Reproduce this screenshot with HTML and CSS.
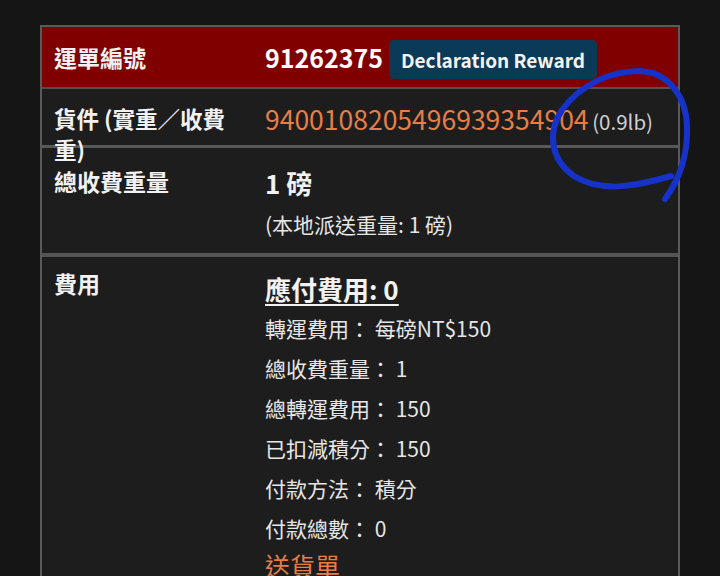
FILE: index.html
```html
<!DOCTYPE html>
<html lang="zh-Hant">
<head>
<meta charset="utf-8">
<link rel="stylesheet" href="styles.css">
</head>
<body>
<div class="page">
  <div class="table">
    <div class="row row-head">
      <div class="label">運單編號</div>
      <div class="value head-value">
        <span class="order-no">91262375</span>
        <span class="badge">Declaration Reward</span>
      </div>
    </div>
    <div class="row row-parcel">
      <div class="label label-wrap">貨件 (實重／收費重)</div>
      <div class="value">
        <span class="tracking">9400108205496939354904</span>
        <span class="weight">(0.9lb)</span>
      </div>
    </div>
    <div class="row row-weight">
      <div class="label">總收費重量</div>
      <div class="value stack">
        <div class="big">1 磅</div>
        <div class="line">(本地派送重量: 1 磅)</div>
      </div>
    </div>
    <div class="row row-fee">
      <div class="label">費用</div>
      <div class="value stack">
        <div class="big due">應付費用: 0</div>
        <div class="line">轉運費用：&nbsp;每磅NT$150</div>
        <div class="line">總收費重量：&nbsp;1</div>
        <div class="line">總轉運費用：&nbsp;150</div>
        <div class="line">已扣減積分：&nbsp;150</div>
        <div class="line">付款方法：&nbsp;積分</div>
        <div class="line">付款總數：&nbsp;0</div>
        <div class="link">送貨單</div>
      </div>
    </div>
  </div>
  <svg class="scribble" width="720" height="576" viewBox="0 0 720 576">
    <path d="M 671 176 C 640 185 602 194 574 176 C 552 161 546 134 562 110 C 580 85 610 71 640 71 C 668 72 686 96 687 126 C 688 156 679 180 665 199" fill="none" stroke="#1632c8" stroke-width="6" stroke-linecap="round" stroke-linejoin="round"/>
  </svg>
</div>
</body>
</html>
```

FILE: styles.css
```css
html, body {
  margin: 0;
  padding: 0;
  background: #151515;
}
body {
  font-family: "Noto Sans CJK TC", "Noto Sans", sans-serif;
  color: #e6e6e6;
  overflow: hidden;
}
.page {
  position: relative;
  width: 720px;
  height: 576px;
  padding: 25px 0 0 40px;
  box-sizing: border-box;
}
.table {
  width: 640px;
  border: 2px solid #5a5a5a;
  border-bottom: none;
  background: #1d1d1d;
  box-sizing: border-box;
}
.row {
  display: flex;
  border-bottom: 3px solid #555;
}
.label {
  width: 223px;
  flex: none;
  padding-left: 12px;
  box-sizing: border-box;
  font-size: 23px;
  font-weight: 700;
  color: #f2f2f2;
  line-height: 31px;
}
.value {
  flex: 1;
  min-width: 0;
}
.row-head {
  background: #800000;
  height: 60px;
  align-items: center;
  border-bottom: 2px solid #505050;
}
.head-value {
  display: flex;
  align-items: center;
  gap: 6px;
}
.order-no {
  font-size: 25px;
  font-weight: 700;
  color: #fff;
}
.badge {
  background: #0b3a56;
  color: #f4f4f4;
  font-size: 19px;
  font-weight: 700;
  padding: 6px 12px 5px;
  margin-top: 4px;
  border-radius: 5px;
  line-height: 28px;
}
.row-parcel {
  height: 59px;
  align-items: flex-start;
  padding-top: 14px;
  box-sizing: border-box;
  border-bottom-color: #585858;
}
.row-parcel .label {
  width: 200px;
  margin-right: 23px;
  font-size: 22.5px;
}
.tracking {
  font-size: 26.5px;
  color: #e67e47;
  line-height: 31px;
}
.weight {
  font-size: 20.5px;
  color: #d0d0d0;
}
.row-weight {
  padding: 18px 0 9px;
  border-bottom-width: 4px;
}
.stack {
  display: flex;
  flex-direction: column;
}
.big {
  font-size: 26px;
  font-weight: 700;
  color: #f2f2f2;
  line-height: 34px;
}
.line {
  font-size: 21px;
  color: #e6e6e6;
  line-height: 40px;
}
.row-weight .line {
  margin-top: 4px;
}
.row-fee {
  padding: 15px 0 0;
  border-bottom: none;
}
.row-fee .label {
  line-height: 22px;
}
.due {
  text-decoration: underline;
  text-decoration-thickness: 2px;
  text-underline-offset: 4px;
  margin-bottom: 2px;
}
.link {
  font-size: 25px;
  color: #e67e47;
  line-height: 34px;
}
.scribble {
  position: absolute;
  left: 0;
  top: 0;
  pointer-events: none;
}
```
